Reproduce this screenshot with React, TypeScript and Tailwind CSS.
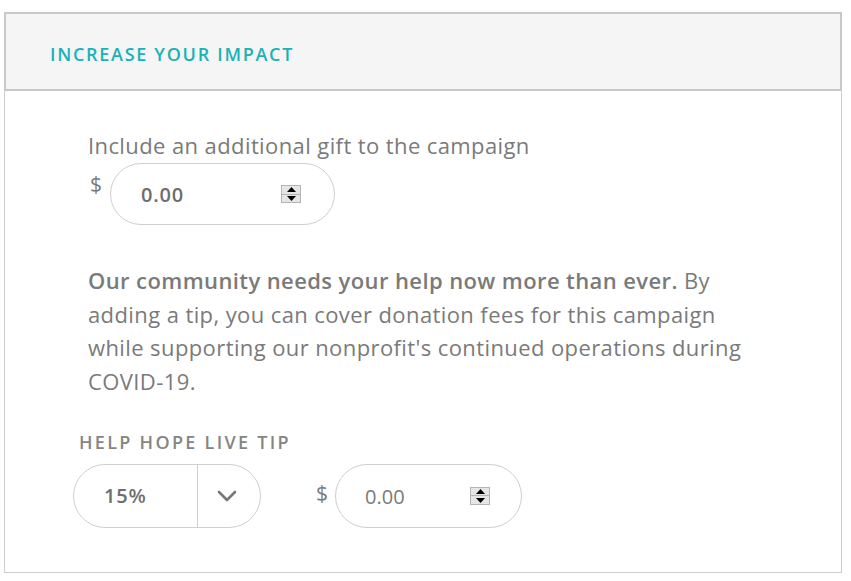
import React from "react";

const Spinner = () => (
  <div className="flex flex-col w-[20px] h-[18px] border border-[#b4b4b4] bg-[#e6e6e6]">
    <div className="flex-1 flex items-center justify-center border-b border-[#b4b4b4]">
      <svg width="9" height="5" viewBox="0 0 9 5">
        <path d="M0 5 L4.5 0 L9 5 Z" fill="#000" />
      </svg>
    </div>
    <div className="flex-1 flex items-center justify-center">
      <svg width="9" height="5" viewBox="0 0 9 5">
        <path d="M0 0 L4.5 5 L9 0 Z" fill="#000" />
      </svg>
    </div>
  </div>
);

const App = () => {
  return (
    <div
      className="w-[851px] h-[581px] bg-white pt-[12px] pl-[4px]"
      style={{ fontFamily: "'Open Sans', Lato, sans-serif" }}
    >
      <div className="w-[838px]">
        <div className="h-[79px] border-2 border-[#c8c8c8] bg-[#f5f5f5] flex items-center pl-[44px] pt-[6px]">
          <h2 className="text-[18px] font-semibold tracking-[1.7px] text-[#1ab1b7] uppercase">
            Increase Your Impact
          </h2>
        </div>
        <div className="h-[482px] border border-t-0 border-[#cccccc]">
          <div className="pl-[83px] pr-[80px] pt-[38px]">
            <p className="text-[22px] leading-[33px] tracking-[0.4px] text-[#7a7a7a]">
              Include an additional gift to the campaign
            </p>
            <div className="flex items-start mt-[1px]">
              <span className="text-[21px] leading-[28px] text-[#7a7a7a] mt-[7px] ml-[2px]">$</span>
              <div className="ml-[8px] w-[225px] h-[62px] rounded-full border border-[#cfcfcf] flex items-center justify-between pl-[30px] pr-[33px]">
                <span className="text-[20px] font-semibold tracking-[0.8px] text-[#6e6e6e] mt-[2px]">0.00</span>
                <Spinner />
              </div>
            </div>
            <p className="mt-[39px] text-[22px] leading-[33.7px] tracking-[0.4px] text-[#7a7a7a]">
              <span className="font-semibold">Our community needs your help now more than ever.</span> By
              adding a tip, you can cover donation fees for this campaign while supporting our
              nonprofit's continued operations during COVID-19.
            </p>
          </div>
          <div className="pl-[68px] mt-[30px]">
            <h3 className="ml-[6px] text-[18px] font-semibold tracking-[2.3px] text-[#858585] uppercase">
              Help Hope Live Tip
            </h3>
            <div className="flex items-start mt-[8px]">
              <div className="w-[188px] h-[64px] rounded-full border border-[#cfcfcf] flex">
                <div className="w-[124px] flex items-center pl-[30px] border-r border-[#cfcfcf]">
                  <span className="text-[20px] font-semibold tracking-[0.8px] text-[#6e6e6e]">15%</span>
                </div>
                <div className="flex-1 flex items-center justify-center pr-[4px]">
                  <svg width="20" height="12" viewBox="0 0 20 12">
                    <path d="M2 2 L10 10 L18 2" fill="none" stroke="#777" strokeWidth="2.6" strokeLinecap="round" strokeLinejoin="round" />
                  </svg>
                </div>
              </div>
              <span className="ml-[55px] text-[21px] leading-[28px] text-[#7a7a7a] mt-[15px]">$</span>
              <div className="ml-[7px] w-[187px] h-[64px] rounded-full border border-[#cfcfcf] flex items-center justify-between pl-[29px] pr-[31px]">
                <span className="text-[20px] text-[#7a7a7a] mt-[2px]">0.00</span>
                <Spinner />
              </div>
            </div>
          </div>
        </div>
      </div>
    </div>
  );
};

export default App;
